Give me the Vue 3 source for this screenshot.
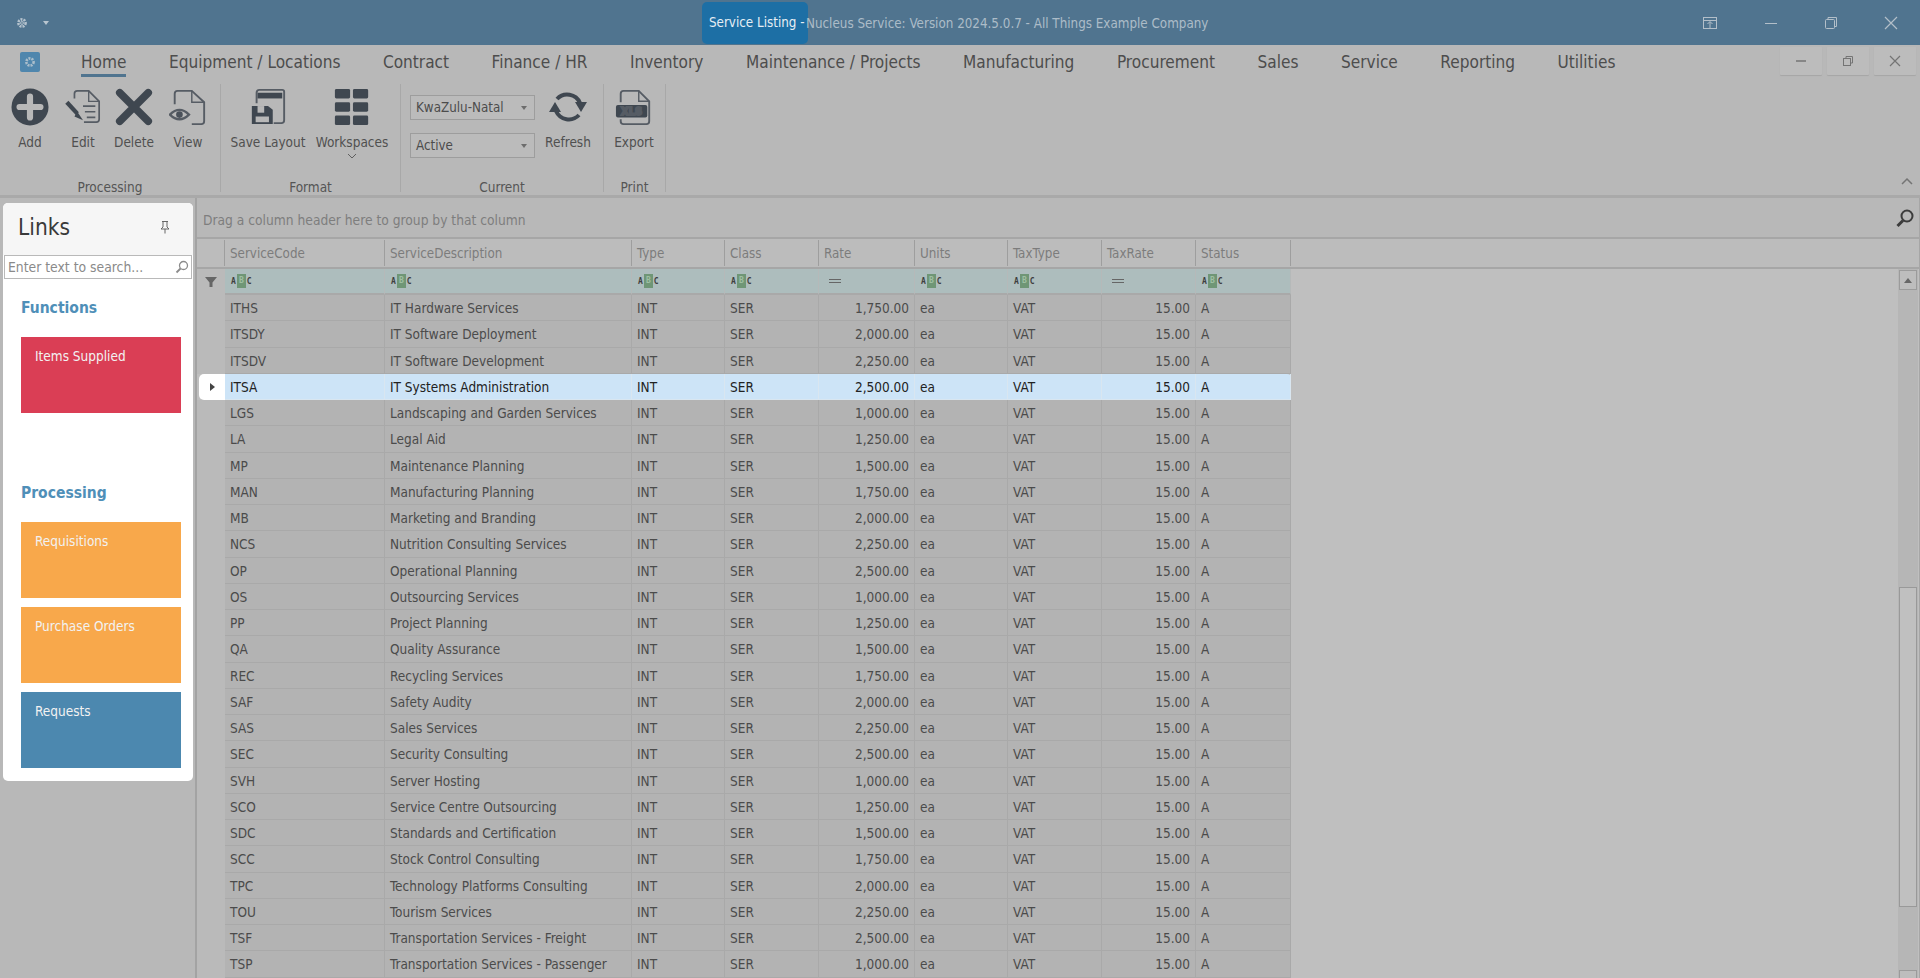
<script setup>
const menu = ['Home','Equipment / Locations','Contract','Finance / HR','Inventory','Maintenance / Projects','Manufacturing','Procurement','Sales','Service','Reporting','Utilities']
const cols = [
  {k:'ServiceCode',w:160,f:'abc'},{k:'ServiceDescription',w:247,f:'abc'},{k:'Type',w:93,f:'abc'},{k:'Class',w:94,f:'abc'},
  {k:'Rate',w:96,f:'eq',num:true},{k:'Units',w:93,f:'abc'},{k:'TaxType',w:94,f:'abc'},{k:'TaxRate',w:94,f:'eq',num:true},{k:'Status',w:95,f:'abc'}
]
const raw = [
['ITHS','IT Hardware Services','1,750.00'],['ITSDY','IT Software Deployment','2,000.00'],['ITSDV','IT Software Development','2,250.00'],
['ITSA','IT Systems Administration','2,500.00'],['LGS','Landscaping and Garden Services','1,000.00'],['LA','Legal Aid','1,250.00'],
['MP','Maintenance Planning','1,500.00'],['MAN','Manufacturing Planning','1,750.00'],['MB','Marketing and Branding','2,000.00'],
['NCS','Nutrition Consulting Services','2,250.00'],['OP','Operational Planning','2,500.00'],['OS','Outsourcing Services','1,000.00'],
['PP','Project Planning','1,250.00'],['QA','Quality Assurance','1,500.00'],['REC','Recycling Services','1,750.00'],
['SAF','Safety Audity','2,000.00'],['SAS','Sales Services','2,250.00'],['SEC','Security Consulting','2,500.00'],
['SVH','Server Hosting','1,000.00'],['SCO','Service Centre Outsourcing','1,250.00'],['SDC','Standards and Certification','1,500.00'],
['SCC','Stock Control Consulting','1,750.00'],['TPC','Technology Platforms Consulting','2,000.00'],['TOU','Tourism Services','2,250.00'],
['TSF','Transportation Services - Freight','2,500.00'],['TSP','Transportation Services - Passenger','1,000.00']
]
const rows = raw.map(r => [r[0],r[1],'INT','SER',r[2],'ea','VAT','15.00','A'])
const gridTemplate = cols.map(c => c.w + 'px').join(' ')
</script>

<template>
  <div class="app">
    <header class="titlebar">
      <div class="tb-left">
        <svg class="gear" width="14" height="14" viewBox="0 0 14 14"><circle cx="7" cy="7" r="3.6" fill="none" stroke="#b4c2cd" stroke-width="2.6" stroke-dasharray="2 1"/><circle cx="7" cy="7" r="1.4" fill="none" stroke="#b4c2cd"/></svg>
        <span class="caret"></span>
      </div>
      <div class="tb-center">
        <span class="tab-active">Service Listing -</span><span class="tb-rest">Nucleus Service: Version 2024.5.0.7 - All Things Example Company</span>
      </div>
      <div class="tb-right">
        <svg width="16" height="14" viewBox="0 0 16 14" fill="none" stroke="#b3bfc9"><rect x="1.5" y="1.5" width="13" height="11"/><path d="M1.5 4.5h13M8 12V6M5.5 8 8 5.5 10.5 8"/></svg>
        <svg width="14" height="14" viewBox="0 0 14 14" fill="none" stroke="#b3bfc9"><path d="M1 7.5h12"/></svg>
        <svg width="14" height="14" viewBox="0 0 14 14" fill="none" stroke="#b3bfc9"><rect x="1.5" y="3.5" width="9" height="9" rx="1"/><path d="M4 3.5V1.5h8.500v9h-2"/></svg>
        <svg width="14" height="14" viewBox="0 0 14 14" fill="none" stroke="#b3bfc9" stroke-width="1.2"><path d="M1 1l12 12M13 1 1 13"/></svg>
      </div>
    </header>

    <nav class="menubar">
      <span class="logo"><svg width="14" height="14" viewBox="0 0 14 14"><circle cx="7" cy="7" r="3.600" fill="none" stroke="#a9bdcb" stroke-width="2.600" stroke-dasharray="2 1"/></svg></span>
      <div class="menu-items">
        <span v-for="(m,i) in menu" :key="m" class="menu-item" :class="{ on: i === 0 }">{{ m }}</span>
      </div>
      <div class="mdi">
        <span class="mdi-btn"><svg width="12" height="12" viewBox="0 0 12 12" stroke="#747474" stroke-width="1.500"><path d="M1 6h10"/></svg></span>
        <span class="mdi-btn"><svg width="12" height="12" viewBox="0 0 12 12" fill="none" stroke="#747474"><rect x="1.500" y="3.500" width="7" height="7"/><path d="M4 3V1.500h6.500V8H9"/></svg></span>
        <span class="mdi-btn"><svg width="12" height="12" viewBox="0 0 12 12" fill="none" stroke="#747474" stroke-width="1.200"><path d="M1 1l10 10M11 1 1 11"/></svg></span>
      </div>
    </nav>

    <section class="ribbon">
      <div class="group g-proc">
        <div class="group-body">
          <div class="rb add"><svg width="38" height="38" viewBox="0 0 40 40"><circle cx="20" cy="20" r="19.500" fill="#3f4750"/><path d="M20 9v22M9 20h22" stroke="#b8b8b8" stroke-width="6.500" stroke-linecap="round"/></svg><span>Add</span></div>
          <div class="rb edit"><svg width="38" height="38" viewBox="0 0 40 40" fill="none" stroke="#565c64" stroke-width="1.800"><path d="M11 11V6q0-3 3-3h12l11 11v19q0 3-3 3h-13"/><path d="M26 3v11h11" stroke-width="1.400"/><path d="M20 19h13M22 25h11M24 31h9"/><path d="M3 15 14 27" stroke="#3f4750" stroke-width="4.500"/><path d="M14 25 20 34l-9-4z" fill="#3f4750" stroke="none"/></svg><span>Edit</span></div>
          <div class="rb del"><svg width="38" height="38" viewBox="0 0 40 40"><path d="M5 5l30 30M35 5 5 35" stroke="#3f4750" stroke-width="8" stroke-linecap="round"/></svg><span>Delete</span></div>
          <div class="rb view"><svg width="38" height="38" viewBox="0 0 40 40" fill="none" stroke="#565c64" stroke-width="2"><path d="M6 17V6q0-3 3-3h15l13 12v20q0 3-3 3h-10"/><path d="M24 3v12h13" stroke-width="1.500"/><path d="M1 28q10-10 20 0q-10 10-20 0z" stroke-width="2.500"/><circle cx="11" cy="28" r="3.500" fill="#4a515a" stroke="none"/></svg><span>View</span></div>
        </div>
        <div class="group-title">Processing</div>
      </div>
      <div class="group g-format">
        <div class="group-body">
          <div class="rb save"><svg width="38" height="38" viewBox="0 0 40 40" fill="none" stroke="#565c64" stroke-width="2"><path d="M8 16V5q0-3 3-3h24q2 0 2 2v30q0 3-3 3h-8"/><rect x="9" y="5" width="26" height="6" fill="#3f4750" stroke="none"/><path d="M3 19h17l5 4v15H3z" fill="#3f4750" stroke="none"/><rect x="9" y="19" width="7" height="7" fill="#b8b8b8" stroke="none"/><rect x="7" y="30" width="14" height="6" fill="#b8b8b8" stroke="none"/></svg><span>Save Layout</span></div>
          <div class="rb ws"><svg width="38" height="38" viewBox="0 0 40 40" fill="#3f4750"><rect x="2" y="1" width="16" height="10" rx="1.500"/><rect x="21" y="1" width="16" height="10" rx="1.500"/><rect x="2" y="15" width="16" height="10" rx="1.500"/><rect x="21" y="15" width="16" height="10" rx="1.500"/><rect x="2" y="29" width="16" height="10" rx="1.500"/><rect x="21" y="29" width="16" height="10" rx="1.500"/></svg><span>Workspaces</span><svg class="chev" width="10" height="6" viewBox="0 0 10 6" fill="none" stroke="#5f5f5f"><path d="M1 1l4 4 4-4"/></svg></div>
        </div>
        <div class="group-title">Format</div>
      </div>
      <div class="group g-current">
        <div class="group-body">
          <div class="combos">
            <div class="combo"><span>KwaZulu-Natal</span><i></i></div>
            <div class="combo"><span>Active</span><i></i></div>
          </div>
          <div class="rb refresh"><svg width="38" height="32" viewBox="0 0 38 32" fill="none" stroke="#3f4750" stroke-width="4"><path d="M8 8A14 14 0 0 1 31 12"/><path d="M30 24A14 14 0 0 1 7 20"/><path d="M26 11H38L32 21z" fill="#3f4750" stroke="none"/><path d="M0 21H12L6 11z" fill="#3f4750" stroke="none"/></svg><span>Refresh</span></div>
        </div>
        <div class="group-title">Current</div>
      </div>
      <div class="group g-print">
        <div class="group-body">
          <div class="rb export"><svg width="38" height="38" viewBox="0 0 40 40" fill="none" stroke="#565c64" stroke-width="2"><path d="M6 15V6q0-3 3-3h16l11 11v21q0 3-3 3H9q-3 0-3-3v-2"/><path d="M25 3v11h11" stroke-width="1.500"/><rect x="1" y="18" width="33" height="13" rx="2" fill="#3f4750" stroke="none"/><text x="17.500" y="28.500" text-anchor="middle" class="xls">XLS</text></svg><span>Export</span></div>
        </div>
        <div class="group-title">Print</div>
      </div>
      <svg class="collapse" width="12" height="8" viewBox="0 0 12 8" fill="none" stroke="#747474" stroke-width="1.500"><path d="M1 7l5-5 5 5"/></svg>
    </section>

    <main class="content">
      <aside class="side">
        <div class="links">
          <div class="links-head"><span class="links-title">Links</span>
            <svg width="12" height="14" viewBox="0 0 12 14" fill="none" stroke="#666"><path d="M3 1.500h6M4 1.500v5.500L2 9h8L8 7V1.500M6 9v4.500"/></svg>
          </div>
          <div class="search"><span>Enter text to search...</span>
            <svg width="14" height="14" viewBox="0 0 14 14" fill="none" stroke="#8b8b8b" stroke-width="1.300"><circle cx="8.500" cy="5.500" r="4"/><path d="M5.500 8.500 1.500 12.500" stroke-width="1.800"/></svg>
          </div>
          <h3 class="sec first">Functions</h3>
          <div class="tile red">Items Supplied</div>
          <h3 class="sec second">Processing</h3>
          <div class="tile orange">Requisitions</div>
          <div class="tile orange">Purchase Orders</div>
          <div class="tile blue">Requests</div>
        </div>
      </aside>

      <div class="gridpane">
        <div class="groupbar"><span>Drag a column header here to group by that column</span>
          <svg width="20" height="20" viewBox="0 0 20 20" fill="none" stroke="#3c3c3c" stroke-width="2"><circle cx="12" cy="8" r="5.500"/><path d="M8 12.500 2.500 18" stroke-width="3"/></svg>
        </div>
        <div class="hrow">
          <div class="ind"></div>
          <div class="cols" :style="{ gridTemplateColumns: gridTemplate }">
            <div v-for="c in cols" :key="c.k" class="hcell">{{ c.k }}</div>
          </div>
        </div>
        <div class="gridwrap">
          <div class="table">
            <div class="frow">
              <div class="ind find"><svg width="12" height="12" viewBox="0 0 12 12" fill="#666"><path d="M0 1h12L7.500 6.500V11h-3V6.500z"/></svg></div>
              <div class="cols" :style="{ gridTemplateColumns: gridTemplate }">
                <div v-for="c in cols" :key="c.k" class="fcell">
                  <span v-if="c.f === 'abc'" class="abc"><b>A</b><em>B</em><b>C</b></span>
                  <span v-else class="eq"></span>
                </div>
              </div>
            </div>
            <div v-for="(r,ri) in rows" :key="r[0]" class="drow" :class="{ sel: ri === 3 }">
              <div class="ind"><span v-if="ri === 3" class="arrow"></span></div>
              <div class="cols" :style="{ gridTemplateColumns: gridTemplate }">
                <div v-for="(v,ci) in r" :key="ci" class="dcell" :class="{ num: cols[ci].num }">{{ v }}</div>
              </div>
            </div>
          </div>
          <div class="scroll">
            <div class="sb-btn"><i></i></div>
            <div class="sb-thumb"></div>
            <div class="sb-btn down"></div>
          </div>
        </div>
      </div>
    </main>
  </div>
</template>

<style>
html, body { margin: 0; overflow: hidden; background: #b8b8b8; }
</style>

<style scoped>
.app { width: 1920px; height: 978px; overflow: hidden; display: flex; flex-direction: column; background: #b8b8b8; font-family: "DejaVu Sans Condensed", "DejaVu Sans", sans-serif; font-stretch: condensed; color: #4c4c4c; font-size: 13.5px; }

.titlebar { height: 45px; flex: none; background: #50748f; display: flex; align-items: center; position: relative; }
.tb-left { display: flex; align-items: center; padding-left: 15px; gap: 14px; }
.caret { width: 0; height: 0; border: 3px solid transparent; border-top: 4px solid #b8c5cf; margin-top: 4px; }
.tb-center { position: absolute; left: 702px; top: 2px; height: 42px; display: flex; align-items: center; font-size: 13.300px; }
.tab-active { background: #1d6fa5; color: #e6eef4; height: 42px; line-height: 42px; width: 99px; padding-left: 7px; border-radius: 5px; white-space: nowrap; }
.tb-rest { color: #acbcc8; white-space: nowrap; margin-left: -2px; }
.tb-right { margin-left: auto; display: flex; align-items: center; gap: 46px; padding-right: 22px; }

.menubar { height: 39px; flex: none; display: flex; align-items: flex-start; position: relative; }
.logo { width: 20px; height: 20px; margin: 7px 0 0 20px; background: #4f86ad; border-radius: 2px; display: flex; align-items: center; justify-content: center; }
.menu-items { display: flex; gap: 42.500px; font-size: 17.100px; color: #4d4d4d; margin-top: 5px; margin-left: 41px; }
.menu-item { line-height: 24px; white-space: nowrap; }
.menu-item.on { border-bottom: 3px solid #50748f; }
.mdi { position: absolute; right: 4px; top: 2px; display: flex; gap: 5px; }
.mdi-btn { width: 42px; height: 28px; background: #bcbcbc; box-shadow: 0 1px 1px #a6a6a6; display: flex; align-items: center; justify-content: center; border-radius: 1px; }

.ribbon { height: 114px; flex: none; display: flex; position: relative; border-bottom: 3px solid #a9a9a9; box-sizing: border-box; }
.group { border-right: 1px solid #a8a8a8; height: 108px; display: flex; flex-direction: column; box-sizing: border-box; flex: none; }
.g-proc { width: 221px; }
.g-format { width: 180px; }
.g-current { width: 203px; }
.g-print { width: 62px; }
.group-body { height: 93px; display: flex; flex: none; }
.group-title { text-align: center; font-size: 13.500px; line-height: 20px; color: #555; }
.rb { display: flex; flex-direction: column; align-items: center; font-size: 13.500px; flex: none; }
.rb span { line-height: 18px; white-space: nowrap; margin-top: 7px; color: #505050; }
.rb svg { flex: none; margin-top: 4px; }
.rb svg.chev { margin-top: 2px; }
.add { margin-left: 9px; width: 42px; }
.edit { margin-left: 10px; width: 44px; }
.del { margin-left: 8px; width: 42px; }
.view { margin-left: 13px; width: 40px; }
.save { margin-left: 7px; width: 80px; }
.ws { width: 70px; margin-left: 9px; }
.combos { margin-left: 9px; width: 125px; padding-top: 11px; display: flex; flex-direction: column; gap: 13px; flex: none; }
.combo { height: 25px; box-sizing: border-box; border: 1px solid #9d9d9d; background: #bbbbbb; display: flex; align-items: center; padding: 0 4px 0 5px; justify-content: space-between; font-size: 13.300px; }
.combo i { width: 0; height: 0; border: 3px solid transparent; border-top: 4px solid #6d6d6d; margin: 3px 3px 0 0; }
.refresh { width: 56px; margin-left: 5px; }
.refresh svg { margin-top: 7px; }
.refresh span { margin-top: 10px; }
.export { width: 48px; margin-left: 6px; }
.xls { font: 700 10.500px "DejaVu Sans", sans-serif; fill: #b8b8b8; }
.collapse { position: absolute; right: 7px; bottom: 10px; }

.content { flex: 1; display: flex; min-height: 0; }
.side { width: 197px; flex: none; border-right: 2px solid #a3a3a3; box-sizing: border-box; padding: 0 0 0 3px; }
.links { margin-top: 5px; width: 190px; height: 578px; background: #fff; border-radius: 5px; box-sizing: border-box; padding: 0 1px; }
.links-head { height: 52px; background: #f6f6f6; margin: 0 -1px; padding: 0 22px 4px 15px; display: flex; align-items: center; justify-content: space-between; border-radius: 5px 5px 0 0; box-sizing: border-box; }
.links-title { font-size: 22.500px; color: #3a3a3a; font-weight: 400; line-height: 28px; }
.search { height: 24px; width: 188px; box-sizing: border-box; border: 1px solid #b9b9b9; display: flex; align-items: center; justify-content: space-between; padding: 0 2px 0 3px; font-size: 13.800px; color: #8a8a8a; background: #fff; }
.sec { margin: 0; font-size: 15.500px; line-height: 20px; color: #4f8fb8; font-weight: 700; padding-left: 17px; }
.sec.first { margin-top: 19px; }
.sec.second { margin-top: 70px; }
.tile { width: 160px; height: 76px; margin-left: 17px; box-sizing: border-box; padding: 9px 14px; color: #f2f2f2; font-size: 13.500px; line-height: 20px; }
.red { background: #da3e55; margin-top: 19px; }
.orange { background: #f8a84b; }
.second + .tile { margin-top: 19px; }
.orange + .tile { margin-top: 9px; }
.blue { background: #4c88af; }

.gridpane { flex: 1; display: flex; flex-direction: column; min-width: 0; border-right: 1px solid #a6a6a6; }
.groupbar { height: 41px; flex: none; padding: 0 4px 0 6px; display: flex; align-items: center; justify-content: space-between; box-sizing: border-box; color: #7e7e7e; font-size: 13.700px; border-bottom: 2px solid #a6a6a6; }
.groupbar span { margin-top: 4px; }
.hrow { height: 28px; display: flex; flex: none; background: #bcbcbc; border-bottom: 2px solid #a6a6a6; box-sizing: content-box; }
.hcell { height: 26px; margin-top: 1px; line-height: 27px; padding-left: 5px; color: #7c7c7c; font-size: 13.300px; border-right: 1px solid #9e9e9e; box-sizing: border-box; }
.gridwrap { flex: 1; display: flex; min-height: 0; overflow: hidden; background: #bfbfbf; }
.table { flex: 1; min-width: 0; }
.ind { width: 28px; flex: none; box-sizing: border-box; }
.hrow .ind { border-right: 1px solid #9e9e9e; height: 26px; margin-top: 1px; }
.cols { display: grid; }
.frow { height: 26px; display: flex; }
.find { background: #bababa; display: flex; align-items: center; justify-content: center; }
.fcell { height: 26px; background: #adbdbd; border-right: 1px solid #b5b9b9; box-sizing: border-box; border-bottom: 2px solid #a9a9a9; display: flex; align-items: center; padding-left: 6px; }
.abc { display: inline-flex; align-items: center; font: 700 8px "DejaVu Sans Mono", monospace; color: #3f3f3f; gap: 1px; }
.abc b { font-weight: 700; }
.abc em { font-style: normal; background: #6f9676; color: #9fc0a4; height: 14px; width: 9px; text-align: center; line-height: 14px; }
.eq { width: 12px; height: 2px; margin-left: 4px; border-top: 1px solid #666; border-bottom: 1px solid #666; }
.drow { height: 26.250px; display: flex; }
.drow .ind { background: #bababa; }
.drow .cols { background: #b3b3b3; }
.dcell { height: 26.250px; line-height: 26px; padding: 0 5px; border-right: 1px solid #a9a9a9; border-bottom: 1px solid #a9a9a9; box-sizing: border-box; font-size: 13.500px; color: #4b4b4b; white-space: nowrap; overflow: hidden; }
.dcell.num { text-align: right; padding-right: 5px; }
.sel .cols { background: #cde4f7; border-radius: 0 4px 4px 0; }
.drow.sel .ind { background: #fff; border-radius: 5px 0 0 5px; display: flex; align-items: center; justify-content: center; margin-left: 2px; width: 26px; }
.sel .dcell { color: #222; border-color: #d9e6f0; }
.arrow { width: 0; height: 0; border: 4px solid transparent; border-left: 5px solid #444; border-right: 0; }
.scroll { width: 20px; flex: none; margin-right: 1px; background: #b6b6b6; display: flex; flex-direction: column; align-items: center; overflow: hidden; }
.sb-btn { width: 18px; height: 20px; box-sizing: border-box; border: 1px solid #9b9b9b; margin-top: 1px; display: flex; align-items: center; justify-content: center; background: #bdbdbd; flex: none; }
.sb-btn i { width: 0; height: 0; border: 4px solid transparent; border-bottom: 5px solid #666; border-top: 0; }
.sb-btn.down { margin-top: 63px; }
.sb-thumb { width: 18px; height: 320px; margin-top: 297px; flex: none; box-sizing: border-box; border: 1px solid #999; background: #c0c0c0; }
</style>
